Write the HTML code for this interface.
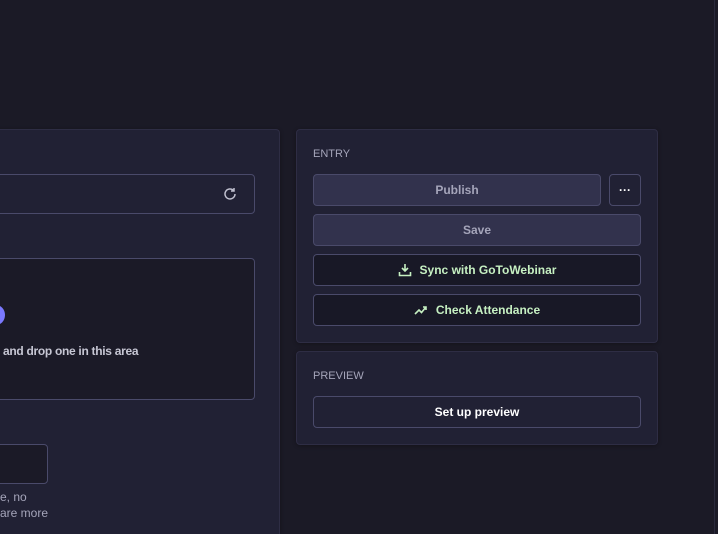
<!DOCTYPE html><html style="width:718px;height:534px;overflow:hidden"><head><style>
*{box-sizing:border-box;margin:0;padding:0}
body{width:718px;height:534px;background:#1b1a26;font-family:"Liberation Sans",sans-serif;position:relative;overflow:hidden}
.p{position:absolute;background:#212134;border:1px solid #2e2d44;border-radius:4px;box-shadow:0 1px 4px rgba(0,0,0,.3)}
.b{position:absolute;border:1px solid #4a4a6a;border-radius:4px;display:flex;align-items:center;justify-content:center;font-size:12px;font-weight:bold;gap:8px}
.lbl{position:absolute;font-size:11px;color:#a5a5ba}
</style></head><body>
<div style="position:absolute;left:714px;top:0;width:1px;height:534px;background:#2a2a3c"></div>
<div class="p" style="left:-10px;top:129px;width:290px;height:405px;border-bottom:none;border-radius:4px 4px 0 0"></div>
<div style="position:absolute;left:-10px;top:174px;width:265px;height:40px;border:1px solid #4a4a6a;border-radius:4px;background:#212134"></div>
<svg style="position:absolute;left:222px;top:186px" width="16" height="16" viewBox="0 0 16 16" fill="none" stroke="#c0c0cf" stroke-width="1.5"><path d="M13 8a5 5 0 1 1-1.5-3.6"/><path d="M12 2v3H9"/></svg>
<div style="position:absolute;left:-10px;top:258px;width:265px;height:142px;border:1px solid #4a4a6a;border-radius:4px;background:#1b1a27"></div>
<div style="position:absolute;left:-13px;top:305px;width:18px;height:20px;border-radius:50%;background:#7b79ff"></div>
<div style="position:absolute;left:3px;top:344px;font-size:12px;color:#c6c6d3;font-weight:bold;letter-spacing:-0.3px">and drop one in this area</div>
<div style="position:absolute;left:-10px;top:444px;width:58px;height:40px;border:1px solid #4a4a6a;border-radius:4px;background:#1b1a27"></div>
<div style="position:absolute;left:0;top:489px;font-size:12px;color:#a5a5ba;line-height:16px">e, no<br>are more</div>
<div class="p" style="left:296px;top:129px;width:362px;height:214px"></div>
<div class="lbl" style="left:313px;top:148px">ENTRY</div>
<div class="b" style="left:313px;top:174px;width:288px;height:32px;background:#32324d;color:#a5a5ba">Publish</div>
<div class="b" style="left:609px;top:174px;width:32px;height:32px;background:#212134;color:#fff">···</div>
<div class="b" style="left:313px;top:214px;width:328px;height:32px;background:#32324d;color:#a5a5ba">Save</div>
<div class="b" style="left:313px;top:254px;width:328px;height:32px;background:#181826;color:#c6f0c2"><svg width="14" height="14" viewBox="0 0 14 14" fill="none" stroke="#c6f0c2" stroke-width="1.6"><path d="M7 1v7M4 5l3 3 3-3M1.5 9v3.5h11V9"/></svg>Sync with GoToWebinar</div>
<div class="b" style="left:313px;top:294px;width:328px;height:32px;background:#181826;color:#c6f0c2"><svg width="14" height="12" viewBox="0 0 14 12" fill="none" stroke="#c6f0c2" stroke-width="1.6"><path d="M1 10l4-4 2.5 2.5L12 3M9 3h3v3"/></svg>Check Attendance</div>
<div class="p" style="left:296px;top:351px;width:362px;height:94px"></div>
<div class="lbl" style="left:313px;top:370px">PREVIEW</div>
<div class="b" style="left:313px;top:396px;width:328px;height:32px;background:#212134;color:#fff">Set up preview</div>
</body></html>
